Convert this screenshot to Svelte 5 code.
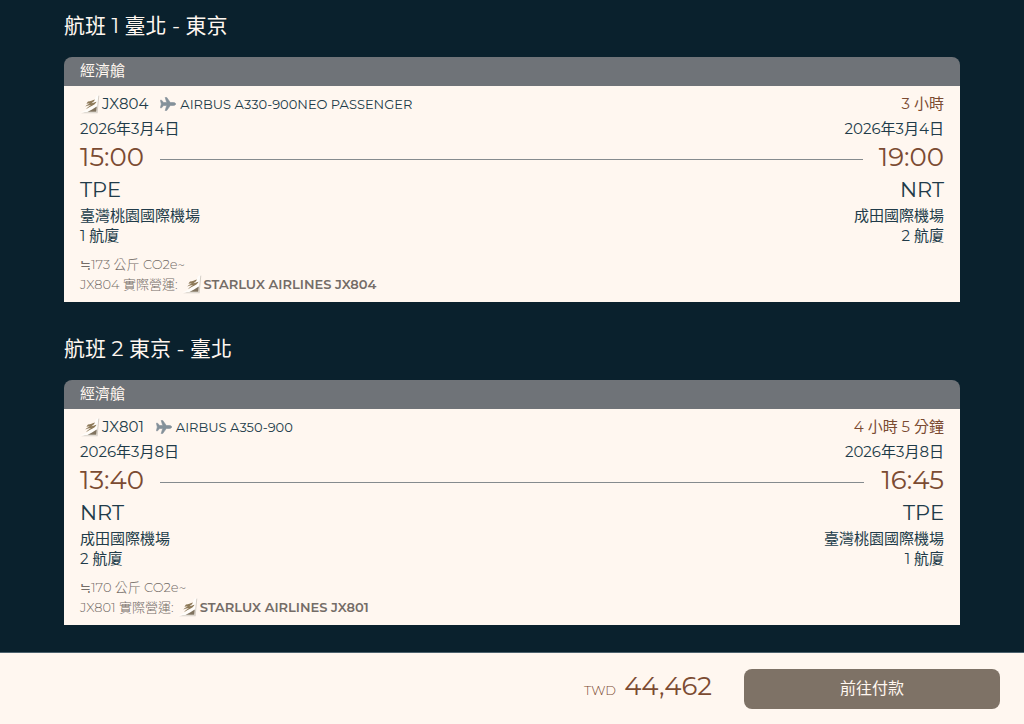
<script>

	const flights = [
		{
			title: "航班 1 臺北 - 東京",
			cabin: "經濟艙",
			number: "JX804",
			aircraft: "AIRBUS A330-900NEO PASSENGER",
			duration: "3 小時",
			from: { date: "2026年3月4日", time: "15:00", code: "TPE", airport: "臺灣桃園國際機場", terminal: "1 航廈" },
			to: { date: "2026年3月4日", time: "19:00", code: "NRT", airport: "成田國際機場", terminal: "2 航廈" },
			co2: "≒173 公斤 CO2e~"
		},
		{
			title: "航班 2 東京 - 臺北",
			cabin: "經濟艙",
			number: "JX801",
			aircraft: "AIRBUS A350-900",
			duration: "4 小時 5 分鐘",
			from: { date: "2026年3月8日", time: "13:40", code: "NRT", airport: "成田國際機場", terminal: "2 航廈" },
			to: { date: "2026年3月8日", time: "16:45", code: "TPE", airport: "臺灣桃園國際機場", terminal: "1 航廈" },
			co2: "≒170 公斤 CO2e~"
		}
	]

	const total = (44462).toLocaleString("en-US")

</script>

{#snippet tail()}
	<svg class="tail" viewBox="0 0 20 20" aria-hidden="true">
		<path d="M1 19.3 C7 18.5 13 12 17 2 L19.3 1.5 L17.6 19.3 Z" fill="#d5cec5" />
		<path d="M0 18.2 C7 17 12.5 11 16.2 2 L18.4 .8 L16.6 18.2 Z" fill="#fffdfa" />
		<path d="M7.500 17.800 C10.500 16.800 13.500 14.500 16.800 12.500 L16.300 17.800 Z" fill="#80735f" />
		<path d="M8 7.600 C10.500 7.600 12.500 6.200 15 5.600 C14.200 7.600 12.800 8.400 11.400 9.200 C13.400 9 15 8.200 16.600 7.800 C14.400 11.800 10.500 12.300 6 15.200 C7.500 13.200 9.500 12.300 11 11.100 C9 11.200 7.300 12 5.300 12.500 C6.500 10.600 8.200 10.500 9.800 9.200 C8.600 9.400 7.500 9.600 6.400 9.800 C7 8.800 7.500 8.200 8 7.600 Z" fill="#8d7958" />
	</svg>
{/snippet}

<div class="page">
	<main>
		{#each flights as flight}
			<section>
				<h2>{flight.title}</h2>
				<div class="cabin">{flight.cabin}</div>
				<div class="card">
					<div class="row info">
						<div class="plane">
							{@render tail()}
							<span class="number">{flight.number}</span>
							<svg class="jet" viewBox="0 0 16 14" aria-hidden="true">
								<path d="M.4 3.200 H1.600 L3.600 5.500 H6.700 L5.200 .4 H6.700 L10.300 5.500 H13.500 C14.900 5.500 15.700 6.300 15.700 7 C15.700 7.700 14.900 8.500 13.500 8.500 H10.300 L6.700 13.600 H5.200 L6.700 8.500 H3.600 L1.600 10.800 H.4 L1.300 7 Z" fill="#84919a" stroke="#84919a" stroke-width=".6" stroke-linejoin="round" />
							</svg>
							<span class="aircraft">{flight.aircraft}</span>
						</div>
						<div class="duration">{flight.duration}</div>
					</div>
					<div class="row date">
						<span>{flight.from.date}</span>
						<span>{flight.to.date}</span>
					</div>
					<div class="row time">
						<span>{flight.from.time}</span>
						<hr>
						<span>{flight.to.time}</span>
					</div>
					<div class="row code">
						<span>{flight.from.code}</span>
						<span>{flight.to.code}</span>
					</div>
					<div class="row airport">
						<span>{flight.from.airport}</span>
						<span>{flight.to.airport}</span>
					</div>
					<div class="row terminal">
						<span>{flight.from.terminal}</span>
						<span>{flight.to.terminal}</span>
					</div>
					<div class="notes">
						<p>{flight.co2}</p>
						<p class="operator">
							<span>{flight.number} 實際營運:</span>
							{@render tail()}
							<strong>STARLUX AIRLINES {flight.number}</strong>
						</p>
					</div>
				</div>
			</section>
		{/each}
	</main>

	<footer>
		<div class="price">
			<span class="currency">TWD</span>
			<span class="amount">{total}</span>
		</div>
		<button type="button">前往付款</button>
	</footer>
</div>

<style>

	:global(body){
		background-color: #0a212d;
	}

	.page{
		display: flex;
		flex-direction: column;
		min-height: 100vh;
		font-family: Montserrat, Inter, "Noto Sans CJK TC", sans-serif;
		font-size: 15px;
		color: #213b49;
	}

	main{
		display: grid;
		gap: 32px;
		padding: 11px 64px 27px;
	}

	h2{
		margin: 0 0 16px;
		font-size: 21px;
		line-height: 30px;
		font-weight: 400;
		color: #fff7f0;
	}

	.cabin{
		padding: 0 16px 2px;
		line-height: 27px;
		color: #fff7f0;
		background-color: #6f7378;
		border-radius: 8px 8px 0 0;
	}

	.card{
		padding: 6px 16px 8px;
		background-color: #fff7f0;
	}

	.row{
		display: flex;
		justify-content: space-between;
	}

	.info{
		line-height: 24px;
	}

	.plane{
		display: flex;
		align-items: center;
	}

	.tail{
		flex: none;
		width: 20px;
		height: 20px;
	}

	.number{
		margin: 0 12px 0 2px;
	}

	.jet{
		width: 16px;
		height: 14px;
		margin-right: 4px;
	}

	.aircraft{
		font-size: 13px;
	}

	.duration{
		color: #7b4b32;
	}

	.date{
		line-height: 26px;
	}

	.time{
		align-items: center;
		gap: 16px;
		font-size: 26px;
		line-height: 30px;
		color: #7b4b32;
	}

	.time span{
		min-width: 64px;
	}

	.time span:last-child{
		text-align: right;
	}

	hr{
		flex: 1;
		margin: 4px 0 0;
		border: 0;
		border-top: 1px solid #858b8e;
	}

	.code{
		font-size: 21px;
		line-height: 36px;
	}

	.airport{
		line-height: 16px;
	}

	.terminal{
		line-height: 24px;
	}

	.notes{
		margin-top: 6px;
		font-size: 13px;
		line-height: 20px;
		font-weight: 300;
		color: #746c67;
	}

	p{
		margin: 0;
	}

	.operator{
		display: flex;
		align-items: center;
	}

	.operator .tail{
		margin: 0 2px 0 4px;
	}

	strong{
		font-weight: 600;
	}

	footer{
		display: flex;
		align-items: center;
		justify-content: flex-end;
		gap: 32px;
		margin-top: auto;
		padding: 16px 24px 15px;
		border-top: 1px solid #4d626e;
		background-color: #fff7f0;
	}

	.price{
		display: flex;
		align-items: baseline;
		gap: 8px;
		padding-bottom: 6px;
		color: #7b4b32;
	}

	.currency{
		font-size: 13px;
		font-weight: 300;
	}

	.amount{
		font-size: 26px;
	}

	button{
		width: 256px;
		height: 40px;
		padding: 0 0 4px;
		border: 0;
		border-radius: 8px;
		background-color: #7e7266;
		color: #fff7f0;
		font-family: inherit;
		font-size: 16px;
	}

</style>
